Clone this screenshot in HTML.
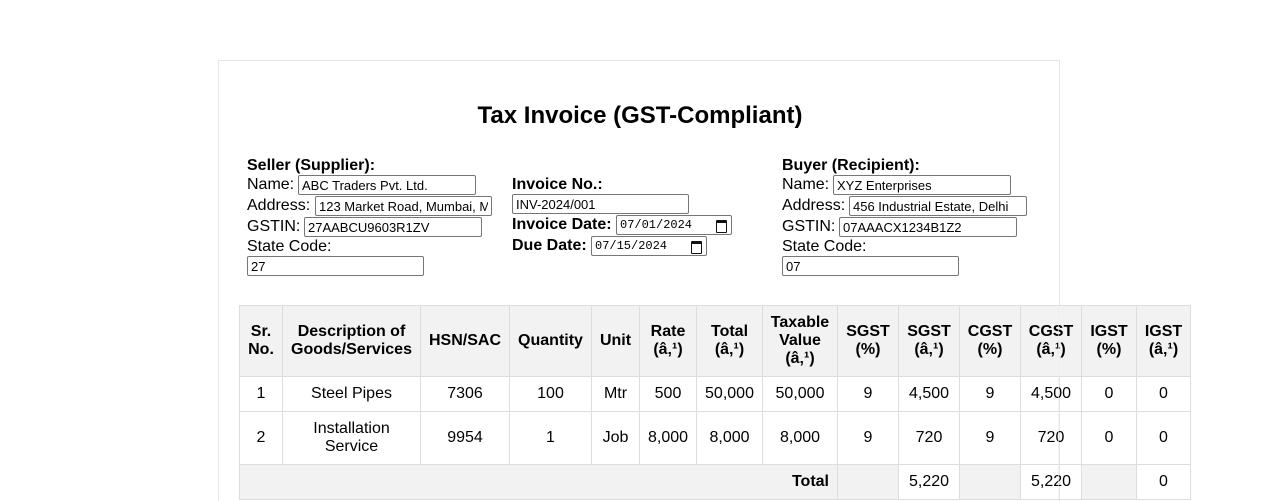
<!DOCTYPE html>
<html style="overflow:hidden;height:501px"><head><meta charset="utf-8"><style>
body{margin:0;background:#fff;font-family:"Liberation Sans",Arial,sans-serif;width:1278px;height:501px;overflow:hidden;position:relative;color:#000}
.box{position:absolute;left:218px;top:60px;width:840px;height:441px;border:1px solid #e6e6e6;border-bottom:none}
.a{position:absolute;font-size:16px;line-height:18px;white-space:nowrap}
.b{font-weight:bold}
input{position:absolute;box-sizing:border-box;border:1px solid #767676;border-radius:2px;font-family:"Liberation Sans",Arial,sans-serif;font-size:13px;padding:0 3px;height:20px;margin:0;background:#fff;color:#000}
.d{font-family:"Liberation Mono",monospace;font-size:12px}
.cal{position:absolute;width:9px;height:9px;border:1.5px solid #111;border-top-width:3px;border-radius:1px}
table{position:absolute;left:239px;top:305px;border-collapse:collapse;font-size:16px}
td,th{border:1px solid #ddd;text-align:center;padding:0 4px;box-sizing:border-box}
th{background:#f2f2f2;height:71px;line-height:18px}
tr.r1 td{height:35px}tr.r2 td{height:53px;line-height:18px}
tr.t td{height:35px}
.g{background:#f2f2f2}
</style></head><body>
<div class="box"></div>
<div class="a b" style="left:0;width:1280px;text-align:center;top:103px;font-size:24px;line-height:26px">Tax Invoice (GST-Compliant)</div>

<div class="a b" style="left:247px;top:157px">Seller (Supplier):</div>
<div class="a" style="left:247px;top:176px">Name:</div><input style="left:298px;top:175px;width:178px" value="ABC Traders Pvt. Ltd.">
<div class="a" style="left:247px;top:197px">Address:</div><input style="left:315px;top:196px;width:177px" value="123 Market Road, Mumbai, Maharashtra">
<div class="a" style="left:247px;top:218px">GSTIN:</div><input style="left:304px;top:217px;width:178px" value="27AABCU9603R1ZV">
<div class="a" style="left:247px;top:238px">State Code:</div><input style="left:247px;top:256px;width:177px" value="27">

<div class="a b" style="left:512px;top:176px">Invoice No.:</div><input style="left:512px;top:194px;width:177px" value="INV-2024/001">
<div class="a b" style="left:512px;top:216px">Invoice Date:</div><input class="d" style="left:616px;top:215px;width:116px" value="07/01/2024"><div class="cal" style="left:716px;top:220px"></div>
<div class="a b" style="left:512px;top:237px">Due Date:</div><input class="d" style="left:591px;top:236px;width:116px" value="07/15/2024"><div class="cal" style="left:691px;top:241px"></div>

<div class="a b" style="left:782px;top:157px">Buyer (Recipient):</div>
<div class="a" style="left:782px;top:176px">Name:</div><input style="left:833px;top:175px;width:178px" value="XYZ Enterprises">
<div class="a" style="left:782px;top:197px">Address:</div><input style="left:849px;top:196px;width:178px" value="456 Industrial Estate, Delhi">
<div class="a" style="left:782px;top:218px">GSTIN:</div><input style="left:839px;top:217px;width:178px" value="07AAACX1234B1Z2">
<div class="a" style="left:782px;top:238px">State Code:</div><input style="left:782px;top:256px;width:177px" value="07">

<table>
<tr><th style="width:43px">Sr.<br>No.</th><th style="width:138px">Description of<br>Goods/Services</th><th style="width:89px">HSN/SAC</th><th style="width:82px">Quantity</th><th style="width:48px">Unit</th><th style="width:57px">Rate<br>(â‚¹)</th><th style="width:66px">Total<br>(â‚¹)</th><th style="width:75px">Taxable<br>Value<br>(â‚¹)</th><th style="width:61px">SGST<br>(%)</th><th style="width:61px">SGST<br>(â‚¹)</th><th style="width:61px">CGST<br>(%)</th><th style="width:61px">CGST<br>(â‚¹)</th><th style="width:55px">IGST<br>(%)</th><th style="width:54px">IGST<br>(â‚¹)</th></tr>
<tr class="r1"><td>1</td><td>Steel Pipes</td><td>7306</td><td>100</td><td>Mtr</td><td>500</td><td>50,000</td><td>50,000</td><td>9</td><td>4,500</td><td>9</td><td>4,500</td><td>0</td><td>0</td></tr>
<tr class="r2"><td>2</td><td>Installation<br>Service</td><td>9954</td><td>1</td><td>Job</td><td>8,000</td><td>8,000</td><td>8,000</td><td>9</td><td>720</td><td>9</td><td>720</td><td>0</td><td>0</td></tr>
<tr class="t"><td colspan="8" class="g" style="text-align:right;font-weight:bold;padding-right:8px">Total</td><td class="g"></td><td>5,220</td><td class="g"></td><td>5,220</td><td class="g"></td><td>0</td></tr>
</table>
<div style="position:absolute;left:1058px;top:305px;width:1px;height:196px;background:#ececec;opacity:.6"></div>
</body></html>
